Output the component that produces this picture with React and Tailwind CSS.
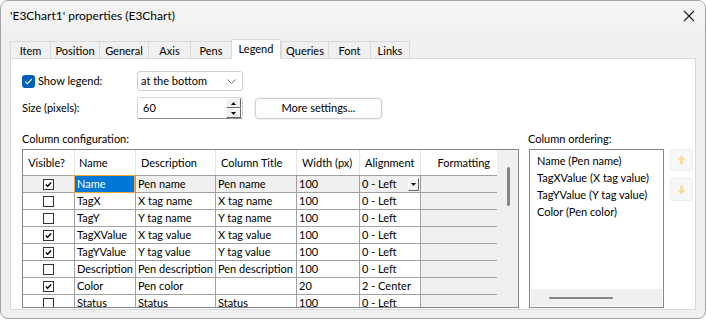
import React from "react";

const TABS = [
  ["Item", 40],
  ["Position", 49],
  ["General", 49],
  ["Axis", 42],
  ["Pens", 41],
  ["Legend", 50],
  ["Queries", 47],
  ["Font", 42],
  ["Links", 40],
];

const ROWS = [
  [true, "Name", "Pen name", "Pen name", "100", "0 - Left"],
  [false, "TagX", "X tag name", "X tag name", "100", "0 - Left"],
  [false, "TagY", "Y tag name", "Y tag name", "100", "0 - Left"],
  [true, "TagXValue", "X tag value", "X tag value", "100", "0 - Left"],
  [true, "TagYValue", "Y tag value", "Y tag value", "100", "0 - Left"],
  [false, "Description", "Pen description", "Pen description", "100", "0 - Left"],
  [true, "Color", "Pen color", "", "20", "2 - Center"],
  [false, "Status", "Status", "Status", "100", "0 - Left"],
];

function ClassicCheck({ checked }) {
  return (
    <svg width="11" height="11" viewBox="0 0 11 11">
      <rect x="0.5" y="0.5" width="10" height="10" fill="#fff" stroke="#333" strokeWidth="1" />
      {checked && (
        <path d="M2.8 5.4 L4.6 7.2 L8.2 3.4" fill="none" stroke="#000" strokeWidth="1.4" />
      )}
    </svg>
  );
}

function Cell({ w, children, className = "" }) {
  return (
    <div
      className={`h-full shrink-0 border-r border-[#a0a0a0] pl-[2px] overflow-hidden whitespace-nowrap leading-[16px] ${className}`}
      style={{ width: w }}
    >
      {children}
    </div>
  );
}

const COLS = [52, 61, 80, 81, 63, 61, 76];

export default function App() {
  return (
    <div className="w-[706px] h-[320px] bg-white font-['Segoe_UI',Lato,sans-serif] text-[11px] text-black">
      <div className="w-[706px] h-[319px] rounded-[8px] border border-[#a3a3a3] overflow-hidden flex flex-col bg-[#f0f0f0]">
        {/* Title bar */}
        <div className="h-[30px] shrink-0 bg-[#f3f3f3] flex items-center pl-[9px] pr-[10px]">
          <span className="flex-1 leading-[16px] text-[12px]">'E3Chart1' properties (E3Chart)</span>
          <svg width="12" height="12" viewBox="0 0 12 12">
            <path d="M1 1 L11 11 M11 1 L1 11" stroke="#1b1b1b" strokeWidth="1.1" />
          </svg>
        </div>
        {/* Body */}
        <div className="flex flex-col pt-[8px] pl-[9px]">
          {/* Tabs */}
          <div className="flex items-end h-[19px] relative z-10">
            {TABS.map(([t, w], i) => {
              const sel = t === "Legend";
              return sel ? (
                <div
                  key={t}
                  className="h-[20px] -mb-px bg-white border border-b-0 border-[#d9d9d9] flex items-start justify-center pt-[1px] leading-[16px]"
                  style={{ width: w }}
                >
                  {t}
                </div>
              ) : (
                <div
                  key={t}
                  className={`h-[17px] bg-[#f0f0f0] border-t border-l border-[#d9d9d9] ${
                    i === TABS.length - 1 ? "border-r" : ""
                  } flex items-center justify-center leading-[16px] pt-[1px]`}
                  style={{ width: w }}
                >
                  {t}
                </div>
              );
            })}
          </div>
          {/* Panel */}
          <div className="w-[686px] h-[252px] border border-[#d9d9d9] bg-white overflow-hidden flex flex-col pl-[11px] pt-[12px]">
            {/* Row 1 */}
            <div className="flex items-center h-[20px]">
              <div className="w-[115px] flex items-center">
                <div className="w-[13px] h-[13px] rounded-[3px] bg-[#005fb8] flex items-center justify-center mt-[1px]">
                  <svg width="9" height="9" viewBox="0 0 9 9">
                    <path d="M1.3 4.6 L3.4 6.7 L7.8 2.2" fill="none" stroke="#fff" strokeWidth="1.1" />
                  </svg>
                </div>
                <span className="ml-[3px] leading-[16px]">Show legend:</span>
              </div>
              <div className="w-[106px] h-[20px] border border-[#cfcfcf] rounded-[3px] bg-white flex items-center pl-[3px] pr-[6px]">
                <span className="flex-1 leading-[16px]">at the bottom</span>
                <svg width="9" height="5" viewBox="0 0 9 5">
                  <path d="M0.5 0.5 L4.5 4.5 L8.5 0.5" fill="none" stroke="#5f5f5f" strokeWidth="0.9" />
                </svg>
              </div>
            </div>
            {/* Row 2 */}
            <div className="flex items-center h-[22px] mt-[6px]">
              <div className="w-[115px] leading-[16px]">Size (pixels):</div>
              <div className="w-[106px] h-[22px] border border-[#d6d6d6] border-b-[#8a8a8a] rounded-[2px] bg-white flex items-center">
                <span className="flex-1 pl-[5px] leading-[16px]">60</span>
                <div className="w-[15px] h-[20px] flex flex-col mr-[1px]">
                  <div className="h-[10px] bg-[#f0f0f0] border border-t-[#fff] border-l-[#fff] border-r-[#696969] border-b-[#696969] flex items-center justify-center">
                    <svg width="5" height="3" viewBox="0 0 5 3">
                      <path d="M0 3 L2.5 0 L5 3 Z" fill="#000" />
                    </svg>
                  </div>
                  <div className="h-[10px] bg-[#f0f0f0] border border-t-[#fff] border-l-[#fff] border-r-[#696969] border-b-[#696969] flex items-center justify-center">
                    <svg width="5" height="3" viewBox="0 0 5 3">
                      <path d="M0 0 L5 0 L2.5 3 Z" fill="#000" />
                    </svg>
                  </div>
                </div>
              </div>
              <div className="ml-[11px] p-[1px] bg-[#f3f3f3] rounded-[5px]">
                <div className="w-[127px] h-[21px] border border-[#d0d0d0] rounded-[4px] bg-[#fdfdfd] flex items-center justify-center leading-[16px]">
                  More settings...
                </div>
              </div>
            </div>
            {/* Bottom section */}
            <div className="flex mt-[12px]">
              {/* Column configuration */}
              <div className="w-[497px] flex flex-col">
                <div className="h-[16px] leading-[16px]">Column configuration:</div>
                <div className="mt-[2px] h-[159px] border border-[#828790] flex overflow-hidden">
                  <div className="w-[474px] flex flex-col">
                    {/* Header */}
                    <div className="h-[26px] shrink-0 flex border-b border-[#a0a0a0] bg-white">
                      {[
                        ["Visible?", "justify-center pr-[4px]"],
                        ["Name", "pl-[4px]"],
                        ["Description", "pl-[5px]"],
                        ["Column Title", "pl-[5px]"],
                        ["Width (px)", "pl-[5px]"],
                        ["Alignment", "pl-[5px]"],
                        ["Formatting", "justify-end pr-[7px]"],
                      ].map(([h, c], i) => (
                        <div
                          key={h}
                          className={`h-full shrink-0 flex items-center leading-[16px] whitespace-nowrap ${
                            i < 6 ? "border-r border-[#e5e5e5]" : ""
                          } ${c}`}
                          style={{ width: COLS[i] }}
                        >
                          {h}
                        </div>
                      ))}
                    </div>
                    {/* Rows */}
                    {ROWS.map((r, ri) => {
                      const sel = ri === 0;
                      const bg = sel ? "bg-[#f0f0f0]" : "bg-white";
                      return (
                        <div key={ri} className="h-[17px] shrink-0 flex border-b border-[#a0a0a0]">
                          <div
                            className={`h-full shrink-0 border-r border-[#a0a0a0] flex items-center justify-center pr-[1px] ${bg}`}
                            style={{ width: COLS[0] }}
                          >
                            <ClassicCheck checked={r[0]} />
                          </div>
                          {sel ? (
                            <div
                              className="h-full shrink-0 border-r border-[#a0a0a0] relative"
                              style={{ width: COLS[1] }}
                            >
                              <div className="absolute -left-px -top-px right-0 bottom-[-1px] border border-[#f7a33e] bg-[#0078d7] text-white pl-[2px] leading-[15px]">
                                {r[1]}
                              </div>
                            </div>
                          ) : (
                            <Cell w={COLS[1]} className={bg}>
                              {r[1]}
                            </Cell>
                          )}
                          <Cell w={COLS[2]} className={bg}>
                            {r[2]}
                          </Cell>
                          <Cell w={COLS[3]} className={bg}>
                            {r[3]}
                          </Cell>
                          <Cell w={COLS[4]} className={bg}>
                            {r[4]}
                          </Cell>
                          <div
                            className={`h-full shrink-0 border-r border-[#a0a0a0] pl-[2px] flex items-center whitespace-nowrap ${bg}`}
                            style={{ width: COLS[5] }}
                          >
                            <span className="flex-1 leading-[16px]">{r[5]}</span>
                            {sel && (
                              <div className="w-[11px] h-[13px] mr-[1px] bg-[#f0f0f0] border border-t-[#fff] border-l-[#fff] border-r-[#696969] border-b-[#696969] flex items-center justify-center">
                                <svg width="5" height="3" viewBox="0 0 5 3">
                                  <path d="M0 0 L5 0 L2.5 3 Z" fill="#000" />
                                </svg>
                              </div>
                            )}
                          </div>
                          <div className="h-full shrink-0 bg-[#f0f0f0]" style={{ width: COLS[6] }} />
                        </div>
                      );
                    })}
                  </div>
                  {/* Vertical scrollbar */}
                  <div className="w-[21px] bg-[#f0f0f0] flex flex-col pt-[17px]">
                    <div className="ml-[10px] w-[3px] h-[39px] rounded-full bg-[#858585]" />
                  </div>
                </div>
              </div>
              {/* Column ordering */}
              <div className="ml-[10px] w-[135px] flex flex-col">
                <div className="h-[16px] leading-[16px] -ml-[1px]">Column ordering:</div>
                <div className="mt-[2px] h-[159px] border border-[#828790] bg-white flex flex-col">
                  <div className="flex-1 pl-[7px] pt-[2px]">
                    {["Name (Pen name)", "TagXValue (X tag value)", "TagYValue (Y tag value)", "Color (Pen color)"].map(
                      (t) => (
                        <div key={t} className="h-[17px] leading-[17px] whitespace-nowrap">
                          {t}
                        </div>
                      )
                    )}
                  </div>
                  <div className="h-[17px] mx-[1px] mb-[1px] bg-[#f0f0f0] flex items-center pl-[18px]">
                    <div className="w-[64px] h-[2px] rounded-full bg-[#858585]" />
                  </div>
                </div>
              </div>
              {/* Up/down buttons */}
              <div className="ml-[6px] w-[23px] flex flex-col pt-[18px]">
                <div className="h-[22px] rounded-[3px] bg-[#f7f7f7] border border-[#ececec] flex items-center justify-center">
                  <svg width="9" height="10" viewBox="0 0 9 10">
                    <path d="M4.5 0.5 L8.5 5 L6 5 L6 9.5 L3 9.5 L3 5 L0.5 5 Z" fill="#fbdb9b" />
                  </svg>
                </div>
                <div className="mt-[7px] h-[23px] rounded-[3px] bg-[#f7f7f7] border border-[#ececec] flex items-center justify-center">
                  <svg width="9" height="10" viewBox="0 0 9 10">
                    <path d="M3 0.5 L6 0.5 L6 5 L8.5 5 L4.5 9.5 L0.5 5 L3 5 Z" fill="#fbdb9b" />
                  </svg>
                </div>
              </div>
            </div>
          </div>
        </div>
      </div>
    </div>
  );
}
